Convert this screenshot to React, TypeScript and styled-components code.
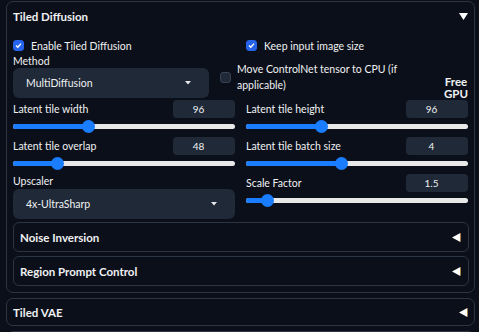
import * as React from "react";
import styled, { createGlobalStyle } from "styled-components";

const colors = {
  page: "#0b0f19",
  border: "#2b3544",
  input: "#1f2937",
  text: "#f0f1f3",
  accent: "#2563eb",
  slider: "#1a7cff",
  track: "#e8e8e8"
};

const GlobalStyle = createGlobalStyle`
  html, body {
    margin: 0;
    padding: 0;
    background: ${colors.page};
  }
  body {
    font-family: Lato, "Liberation Sans", sans-serif;
    color: ${colors.text};
  }
`;

const Page = styled.div`
  width: 479px;
  height: 332px;
  overflow: hidden;
  padding: 1px 4px 0 6px;
  box-sizing: border-box;
  display: flex;
  flex-direction: column;
  gap: 5px;
`;

const Accordion = styled.div`
  border: 1px solid ${colors.border};
  border-radius: 7px;
  box-sizing: border-box;
  flex: none;
`;

const AccordionHeader = styled.div`
  height: ${(props: { h: number }) => props.h}px;
  display: flex;
  align-items: center;
  justify-content: space-between;
  padding: 0 6px 0 6px;
  font-size: 11.5px;
  font-weight: 700;
`;

const SubAccordion = styled.div`
  border: 1px solid ${colors.border};
  border-radius: 6px;
  height: 30px;
  box-sizing: border-box;
  display: flex;
  align-items: center;
  justify-content: space-between;
  padding: 0 7px 0 6px;
  font-size: 11.5px;
  font-weight: 700;
`;

const Body = styled.div`
  padding: 0 5px 6px 6px;
  display: flex;
  flex-direction: column;
`;

const Grid = styled.div`
  display: grid;
  grid-template-columns: 222px 222px;
  column-gap: 11px;
`;

const CheckRow = styled.label`
  display: flex;
  align-items: center;
  gap: 7px;
  font-size: 10.5px;
  height: 11px;
`;

const Box = styled.span`
  width: 11px;
  height: 11px;
  flex: none;
  border-radius: 3px;
  box-sizing: border-box;
  display: flex;
  align-items: center;
  justify-content: center;
  background: ${(props: { checked: boolean }) =>
    props.checked ? colors.accent : colors.input};
  border: 1px solid
    ${(props: { checked: boolean }) =>
      props.checked ? colors.accent : "#374151"};
`;

const Label = styled.div`
  font-size: 10.5px;
  line-height: 14px;
`;

const Select = styled.div`
  height: 30px;
  box-sizing: border-box;
  width: ${(props: { w: number }) => props.w}px;
  background: ${colors.input};
  border-radius: 6px;
  display: flex;
  align-items: center;
  justify-content: space-between;
  padding: 0 18px 0 13px;
  font-size: 10.5px;
`;

const MethodRow = styled.div`
  display: flex;
  align-items: flex-start;
  margin-top: 3px;
`;

const LabeledSelect = styled.div`
  display: flex;
  flex-direction: column;
  gap: ${(props: { gap: number }) => props.gap}px;
`;

const CpuOption = styled.div`
  display: flex;
  align-items: center;
  gap: 6px;
  margin-left: 11px;
  margin-top: 7px;
  font-size: 10.5px;
  line-height: 16px;
`;

const CpuText = styled.span`
  width: 165px;
`;

const FreeGpu = styled.div`
  margin-left: auto;
  margin-top: 22px;
  margin-bottom: -3px;
  font-size: 11.5px;
  font-weight: 700;
  line-height: 12px;
  text-align: center;
  padding-right: 1px;
`;

const SliderBlock = styled.div`
  display: flex;
  flex-direction: column;
  height: 37px;
`;

const SliderTop = styled.div`
  display: flex;
  align-items: center;
  justify-content: space-between;
  height: 18px;
`;

const NumberBox = styled.div`
  width: 62px;
  height: 18px;
  box-sizing: border-box;
  background: ${colors.input};
  border-radius: 4px;
  font-size: 10px;
  padding-right: 11px;
  display: flex;
  align-items: center;
  justify-content: center;
`;

const Track = styled.div`
  position: relative;
  margin-top: 6px;
  height: 5px;
  border-radius: 3px;
  background: ${colors.track};
`;

const Fill = styled.div`
  height: 100%;
  border-radius: 3px;
  background: ${colors.slider};
`;

const Thumb = styled.div`
  position: absolute;
  top: -4px;
  width: 13px;
  height: 13px;
  margin-left: -6px;
  border-radius: 50%;
  background: ${colors.slider};
`;

const Stack = styled.div`
  display: flex;
  flex-direction: column;
  gap: 4px;
  margin-top: 3px;
`;

const Caret = () => (
  <svg width="6" height="4" viewBox="0 0 6 4">
    <path d="M0 0 H6 L3 3.5 Z" fill="#e5e7eb" />
  </svg>
);

const Down = () => (
  <svg width="9" height="7" viewBox="0 0 9 7">
    <path d="M0 0 H9 L4.5 7 Z" fill="#ffffff" />
  </svg>
);

const Left = () => (
  <svg width="9" height="9" viewBox="0 0 9 9">
    <path d="M8.3 0 V9 L0 4.5 Z" fill="#ffffff" />
    <path d="M8.3 0.5 V8.5 H9 V0.5 Z" fill="#c98a3a" />
  </svg>
);

const Check = () => (
  <svg width="9" height="9" viewBox="0 0 9 9">
    <path
      d="M2 4.6 L3.8 6.3 L7 2.6"
      fill="none"
      stroke="#fff"
      strokeWidth="1.4"
    />
  </svg>
);

const Slider = (props: { label: string; value: string; pct: number }) => (
  <SliderBlock>
    <SliderTop>
      <Label>{props.label}</Label>
      <NumberBox>{props.value}</NumberBox>
    </SliderTop>
    <Track>
      <Fill style={{ width: `${props.pct}%` }} />
      <Thumb style={{ left: `${props.pct}%` }} />
    </Track>
  </SliderBlock>
);

export default function App() {
  return (
    <Page>
      <GlobalStyle />
      <Accordion>
        <AccordionHeader h={29}>
          <span>Tiled Diffusion</span>
          <Down />
        </AccordionHeader>
        <Body>
          <Grid style={{ marginTop: 9 }}>
            <CheckRow>
              <Box checked>
                <Check />
              </Box>
              Enable Tiled Diffusion
            </CheckRow>
            <CheckRow>
              <Box checked>
                <Check />
              </Box>
              Keep input image size
            </CheckRow>
          </Grid>
          <MethodRow>
            <LabeledSelect gap={0}>
              <Label>Method</Label>
              <Select w={196}>
                <span>MultiDiffusion</span>
                <Caret />
              </Select>
            </LabeledSelect>
            <CpuOption>
              <Box checked={false} />
              <CpuText>Move ControlNet tensor to CPU (if applicable)</CpuText>
            </CpuOption>
            <FreeGpu>
              Free
              <br />
              GPU
            </FreeGpu>
          </MethodRow>
          <Grid style={{ marginTop: 2 }}>
            <div>
              <Slider label="Latent tile width" value="96" pct={34} />
              <Slider label="Latent tile overlap" value="48" pct={20} />
              <LabeledSelect gap={1}>
                <Label>Upscaler</Label>
                <Select w={222}>
                  <span>4x-UltraSharp</span>
                  <Caret />
                </Select>
              </LabeledSelect>
            </div>
            <div>
              <Slider label="Latent tile height" value="96" pct={34} />
              <Slider label="Latent tile batch size" value="4" pct={43} />
              <Slider label="Scale Factor" value="1.5" pct={9.5} />
            </div>
          </Grid>
          <Stack>
            <SubAccordion>
              <span>Noise Inversion</span>
              <Left />
            </SubAccordion>
            <SubAccordion>
              <span>Region Prompt Control</span>
              <Left />
            </SubAccordion>
          </Stack>
        </Body>
      </Accordion>
      <Accordion>
        <AccordionHeader h={26}>
          <span>Tiled VAE</span>
          <Left />
        </AccordionHeader>
      </Accordion>
      <Accordion style={{ height: 20 }} />
    </Page>
  );
}
